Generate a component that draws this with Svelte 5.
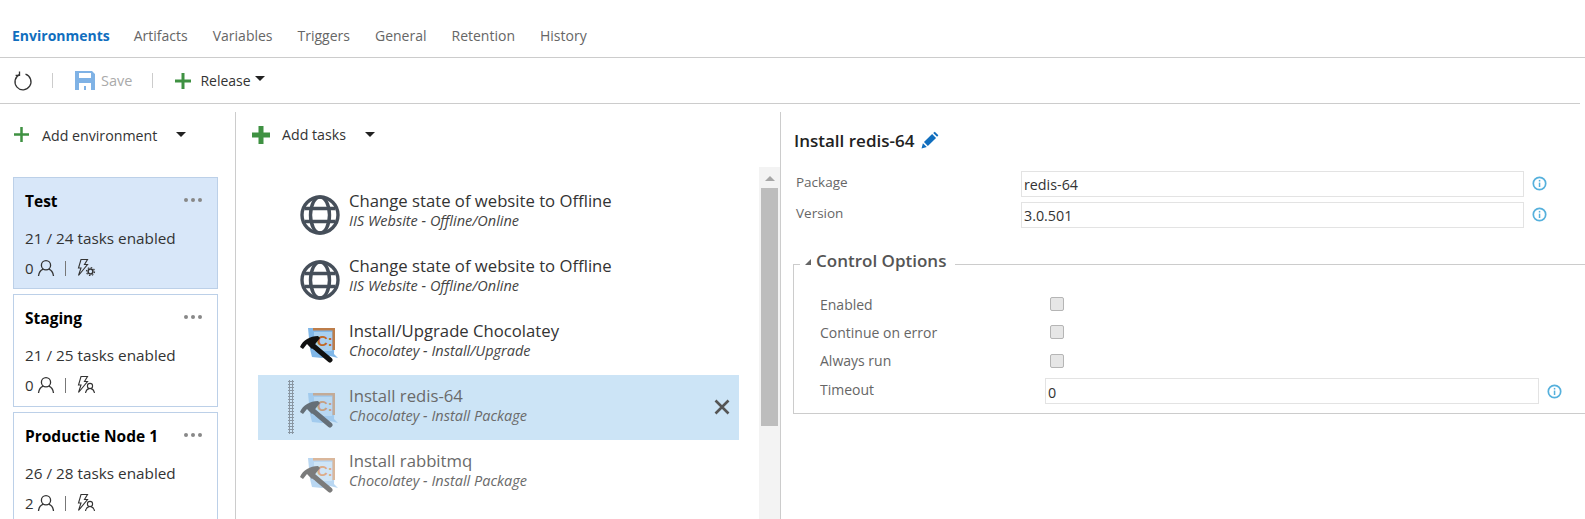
<script lang="ts">
  const tabs = ["Environments", "Artifacts", "Variables", "Triggers", "General", "Retention", "History"];

  const environments = [
    { name: "Test", tasks: "21 / 24 tasks enabled", approvers: 0, trigger: "gear", selected: true },
    { name: "Staging", tasks: "21 / 25 tasks enabled", approvers: 0, trigger: "user", selected: false },
    { name: "Productie Node 1", tasks: "26 / 28 tasks enabled", approvers: 2, trigger: "user", selected: false },
  ];

  const tasks = [
    { title: "Change state of website to Offline", sub: "IIS Website - Offline/Online", icon: "globe", state: "" },
    { title: "Change state of website to Offline", sub: "IIS Website - Offline/Online", icon: "globe", state: "" },
    { title: "Install/Upgrade Chocolatey", sub: "Chocolatey - Install/Upgrade", icon: "choco", state: "" },
    { title: "Install redis-64", sub: "Chocolatey - Install Package", icon: "choco", state: "disabled selected" },
    { title: "Install rabbitmq", sub: "Chocolatey - Install Package", icon: "choco", state: "disabled" },
    { title: "Configure rabbitmq", sub: "PowerShell", icon: "choco", state: "" },
  ];

  const options = ["Enabled", "Continue on error", "Always run"];
</script>

{#snippet info()}
  <svg class="info" width="15" height="15" viewBox="0 0 15 15">
    <circle cx="7.5" cy="7.5" r="6.2" fill="none" stroke="#55b0dc" stroke-width="1.7" />
    <rect x="6.8" y="6.6" width="1.5" height="4.4" fill="#55b0dc" />
    <rect x="6.8" y="3.9" width="1.5" height="1.6" fill="#55b0dc" />
  </svg>
{/snippet}

{#snippet plus(size, bar, color)}
  <svg width={size} height={size} viewBox="0 0 {size} {size}">
    <rect x={(size - bar) / 2} y="0" width={bar} height={size} fill={color} />
    <rect x="0" y={(size - bar) / 2} width={size} height={bar} fill={color} />
  </svg>
{/snippet}

{#snippet choco()}
  <svg class="task-icon choco" width="40" height="36" viewBox="0 0 40 36">
    <path d="M8 1 L35 1 L34 27 L38 31 L30 29 L22 31 L12 30 L10 22 Z" fill="#80b7e8" />
    <path d="M13 1 L35 1 L35 23 L32.5 23 L32.5 3.5 L13 3.5 Z" fill="#bd7d4a" />
    <rect x="14" y="5" width="18" height="19" fill="#a9d0f0" />
    <text x="17" y="19" class="choco-c">C:</text>
    <path d="M11 17 L30 33" stroke="#111" stroke-width="5" stroke-linecap="round" />
    <path d="M0 20 C3 13 10 9 18 9 L20 11 L16 16 L12 22 L7 17 L3 22 Z" fill="#111" />
  </svg>
{/snippet}

<div class="page">
  <nav class="tabs">
    {#each tabs as tab, i}
      <span class="tab" class:active={i === 0}>{tab}</span>
    {/each}
  </nav>

  <div class="toolbar">
    <svg class="refresh" width="20" height="22" viewBox="0 0 20 22" fill="none" stroke="#333" stroke-width="1.3">
      <path d="M6.5 4.6 A8 8 0 1 0 12.5 4.2" />
      <path d="M6.5 1.5 L6.5 5.4 L2.6 5.4" />
    </svg>
    <span class="sep"></span>
    <svg class="save-icon" width="20" height="19" viewBox="0 0 20 19">
      <path d="M0 0 H17 L20 3 V19 H16 V12 H4 V19 H0 Z M4 2 V7 H16 V2 Z" fill="#7fb2e5" />
      <rect x="9" y="15" width="2" height="4" fill="#7fb2e5" />
    </svg>
    <span class="save">Save</span>
    <span class="sep second"></span>
    {@render plus(16, 3, "#3f9142")}
    <span class="release">Release</span>
    <span class="caret small"></span>
  </div>

  <div class="main">
    <aside class="envs">
      <div class="env-head">
        {@render plus(15, 2.5, "#3f9142")}
        <span class="add-label">Add environment</span>
        <span class="caret"></span>
      </div>
      <div class="cards">
        {#each environments as env}
          <div class="card" class:selected={env.selected}>
            <div class="card-top">
              <strong>{env.name}</strong>
              <span class="dots"><i></i><i></i><i></i></span>
            </div>
            <div class="card-tasks">{env.tasks}</div>
            <div class="card-meta">
              <span>{env.approvers}</span>
              <svg width="18" height="18" viewBox="0 0 18 18" fill="none" stroke="#333" stroke-width="1.3">
                <circle cx="9" cy="6.2" r="4.6" />
                <path d="M1.5 17 C2 13 4.5 10.8 6.4 10.2 M16.5 17 C16 13 13.5 10.8 11.6 10.2" />
              </svg>
              <span class="pipe"></span>
              <svg width="20" height="20" viewBox="0 0 20 20" fill="none" stroke="#333" stroke-width="1.1">
                <path d="M5 1.5 H11.5 L8.5 6.5 H11.5 L2.5 17.5 L5 10 H2.5 Z" />
                {#if env.trigger === "gear"}
                  <circle cx="14.5" cy="13.5" r="2.4" stroke-width="1.5" />
                  <circle cx="14.5" cy="13.5" r="4" stroke-width="1.2" stroke-dasharray="1.5 1.6" />
                {:else}
                  <circle cx="14" cy="11" r="2.6" />
                  <path d="M9.5 18 C10 15.5 11.5 14 13 13.6 M18.5 18 C18 15.5 16.5 14 15 13.6" />
                {/if}
              </svg>
            </div>
          </div>
        {/each}
      </div>
    </aside>

    <section class="tasks">
      <div class="tasks-head">
        {@render plus(18, 5, "#3f9142")}
        <span class="add-label">Add tasks</span>
        <span class="caret"></span>
      </div>
      <div class="tasks-body">
        <div class="list">
          {#each tasks as task}
            <div class="row {task.state}">
              {#if task.state.includes("selected")}
                <span class="grip"></span>
              {/if}
              {#if task.icon === "globe"}
                <svg class="task-icon" width="40" height="40" viewBox="0 0 40 40" fill="none" stroke="#464f5a" stroke-width="3.4">
                  <circle cx="20" cy="20" r="18" />
                  <ellipse cx="20" cy="20" rx="9.5" ry="18" />
                  <path d="M4.5 13.5 H35.5 M4.5 26.5 H35.5" />
                </svg>
              {:else}
                {@render choco()}
              {/if}
              <div class="row-text">
                <div class="row-title">{task.title}</div>
                <div class="row-sub">{task.sub}</div>
              </div>
              {#if task.state.includes("selected")}
                <svg class="remove" width="16" height="16" viewBox="0 0 16 16" stroke="#555" stroke-width="2.6">
                  <path d="M1.5 1.5 L14.5 14.5 M14.5 1.5 L1.5 14.5" />
                </svg>
              {/if}
            </div>
          {/each}
        </div>
        <div class="scrollbar">
          <span class="arrow"></span>
          <span class="thumb"></span>
        </div>
      </div>
    </section>

    <section class="detail">
      <h2>
        Install redis-64
        <svg width="18" height="18" viewBox="0 0 17 17">
          <path d="M0.5 16.5 L1.8 11.5 L5.5 15.2 Z M2.8 10.5 L10.5 2.8 L14.2 6.5 L6.5 14.2 Z M11.5 1.8 L13 0.6 L16.4 4 L15.2 5.5 Z" fill="#106ebe" />
        </svg>
      </h2>
      <div class="field">
        <label for="pkg">Package</label>
        <input id="pkg" value="redis-64" />
        {@render info()}
      </div>
      <div class="field">
        <label for="ver">Version</label>
        <input id="ver" value="3.0.501" />
        {@render info()}
      </div>

      <fieldset>
        <legend><span class="tri"></span>Control Options</legend>
        {#each options as option}
          <div class="option">
            <span class="option-label">{option}</span>
            <span class="check"></span>
          </div>
        {/each}
        <div class="option timeout">
          <label class="option-label" for="timeout">Timeout</label>
          <input id="timeout" value="0" />
          {@render info()}
        </div>
      </fieldset>
    </section>
  </div>
</div>

<style>
  :global(body) {
    margin: 0;
    background: #fff;
  }
  .page {
    width: 1585px;
    height: 519px;
    overflow: hidden;
    font-family: "Open Sans", "Noto Sans", sans-serif;
    color: #333;
  }

  .tabs {
    display: flex;
    align-items: center;
    gap: 25px;
    box-sizing: border-box;
    height: 58px;
    padding: 14px 0 0 12px;
    border-bottom: 1px solid #ccc;
  }
  .tab {
    font-size: 14px;
    color: #666;
  }
  .tab.active {
    margin-right: -1px;
    color: #106ebe;
    font-weight: 700;
  }

  .toolbar {
    display: flex;
    align-items: center;
    box-sizing: border-box;
    width: 1580px;
    height: 46px;
    padding-left: 13px;
    border-bottom: 1px solid #ccc;
  }
  .sep {
    width: 1px;
    height: 15px;
    margin: 0 22px 0 19px;
    background: #ccc;
  }
  .sep.second {
    margin: 0 22px 0 20px;
  }
  .save {
    margin-left: 6px;
    font-size: 14.5px;
    color: #aaa;
  }
  .release {
    margin-left: 9px;
    font-size: 14px;
  }
  .caret {
    width: 0;
    height: 0;
    margin-left: 19px;
    border-left: 5px solid transparent;
    border-right: 5px solid transparent;
    border-top: 5px solid #222;
  }
  .caret.small {
    margin: 0 0 4px 4px;
  }

  .main {
    display: flex;
    height: 415px;
  }
  .envs {
    box-sizing: border-box;
    width: 236px;
    margin-top: 8px;
    border-right: 1px solid #ccc;
  }
  .env-head {
    display: flex;
    align-items: center;
    height: 65px;
    padding: 0 0 21px 14px;
    box-sizing: border-box;
  }
  .env-head .add-label {
    margin: 3px 0 0 13px;
  }
  .add-label {
    margin-left: 13px;
    font-size: 14.2px;
  }
  .cards {
    display: flex;
    flex-direction: column;
    gap: 5px;
    margin-left: 13px;
    width: 205px;
  }
  .card {
    flex: none;
    box-sizing: border-box;
    height: 113px;
    padding: 14px 11px 0;
    border: 1px solid #bcd0e8;
    background: #fff;
  }
  .card.selected {
    height: 112px;
    background: #d8e7f9;
  }
  .card-top {
    display: flex;
    justify-content: space-between;
    align-items: flex-start;
    height: 20px;
  }
  .card-top strong {
    margin-top: -1px;
    font-size: 15.5px;
    line-height: 20px;
    font-weight: 700;
    color: #000;
  }
  .dots {
    display: flex;
    gap: 3px;
    margin: 6px 4px 0 0;
  }
  .dots i {
    width: 4px;
    height: 4px;
    border-radius: 50%;
    background: #888;
  }
  .card-tasks {
    margin-top: 16px;
    font-size: 15.3px;
    line-height: 20px;
  }
  .card-meta {
    display: flex;
    align-items: center;
    gap: 3px;
    margin-top: 9px;
    height: 22px;
    font-size: 15px;
  }
  .pipe {
    width: 1px;
    height: 15px;
    margin: 0 7px 0 7px;
    background: #777;
  }

  .tasks {
    box-sizing: border-box;
    width: 545px;
    margin-top: 8px;
    border-right: 1px solid #ccc;
  }
  .tasks-head {
    display: flex;
    align-items: center;
    height: 45px;
    padding-left: 16px;
    box-sizing: border-box;
    margin-bottom: 10px;
  }
  .tasks-head .add-label {
    margin-left: 12px;
  }
  .tasks-body {
    display: flex;
    height: 400px;
  }
  .list {
    width: 481px;
    margin: 13px 20px 0 22px;
  }
  .row {
    position: relative;
    display: flex;
    align-items: flex-start;
    box-sizing: border-box;
    height: 65px;
    padding-left: 42px;
  }
  .row.selected {
    background: #cce4f6;
  }
  .grip {
    position: absolute;
    left: 30px;
    top: 5px;
    width: 6px;
    height: 54px;
    background-image: radial-gradient(#8a97a3 1px, transparent 1.2px);
    background-size: 3px 3px;
  }
  .task-icon {
    flex: none;
    margin-top: 15px;
  }
  .task-icon.choco {
    margin-top: 17px;
  }
  .choco-c {
    font-family: "Liberation Sans", sans-serif;
    font-weight: 700;
    font-size: 15px;
    fill: #c06a28;
  }
  .row-text {
    margin: 10px 0 0 9px;
  }
  .row-title {
    font-size: 16.7px;
    line-height: 22px;
    color: #333;
  }
  .row-sub {
    font-size: 14.5px;
    line-height: 18px;
    font-style: italic;
    color: #444;
  }
  .row.disabled .row-title,
  .row.disabled .row-sub {
    color: #6a6a6a;
  }
  .row.disabled .task-icon {
    opacity: 0.55;
  }
  .remove {
    position: absolute;
    right: 9px;
    top: 24px;
  }
  .scrollbar {
    display: flex;
    flex-direction: column;
    align-items: center;
    width: 21px;
    height: 400px;
    background: #f3f3f3;
  }
  .arrow {
    width: 0;
    height: 0;
    margin: 9px 0 7px;
    border-left: 5px solid transparent;
    border-right: 5px solid transparent;
    border-bottom: 5px solid #a6a6a6;
  }
  .thumb {
    width: 17px;
    height: 238px;
    background: #bdbdbd;
  }

  .detail {
    flex: 1;
    min-width: 0;
    padding-top: 23px;
  }
  h2 {
    display: flex;
    align-items: center;
    gap: 7px;
    margin: 0 0 18px 13px;
    height: 26px;
    font-size: 17px;
    font-weight: 600;
    color: #222;
  }
  .field {
    display: flex;
    align-items: center;
    height: 25px;
    margin: 0 0 6px 15px;
  }
  .field label {
    width: 225px;
    margin-bottom: 4px;
    font-size: 13.5px;
    color: #666;
  }
  input {
    box-sizing: border-box;
    height: 26px;
    padding: 2px 2px 0;
    border: 1px solid #e3e3e3;
    outline: none;
    font: inherit;
    font-size: 14.3px;
    color: #333;
  }
  .field input {
    width: 503px;
  }
  .info {
    flex: none;
    margin-left: 8px;
  }
  fieldset {
    box-sizing: border-box;
    margin: 22px 0 0 12px;
    padding: 10px 0 8px 26px;
    height: 165px;
    border: 0;
    border-top: 1px solid #ccc;
    border-left: 1px solid #ccc;
    border-bottom: 1px solid #ccc;
    min-width: 0;
  }
  legend {
    display: flex;
    align-items: center;
    margin-left: -20px;
    padding: 0 9px 8px 5px;
    font-size: 17px;
    font-weight: 600;
    color: #555;
  }
  .tri {
    width: 0;
    height: 0;
    margin: 3px 5px 0 0;
    border-left: 6px solid transparent;
    border-bottom: 6px solid #666;
  }
  .option {
    display: flex;
    align-items: center;
    height: 28.3px;
  }
  .option-label {
    width: 230px;
    font-size: 14px;
    color: #666;
  }
  .timeout .option-label {
    margin-bottom: 4px;
  }
  .timeout {
    margin-top: 2px;
  }
  .check {
    box-sizing: border-box;
    width: 14px;
    height: 14px;
    border: 1px solid #b5b5b5;
    border-radius: 2px;
    background: #e6e6e6;
  }
  .timeout input {
    width: 494px;
    margin-left: -5px;
  }
</style>
